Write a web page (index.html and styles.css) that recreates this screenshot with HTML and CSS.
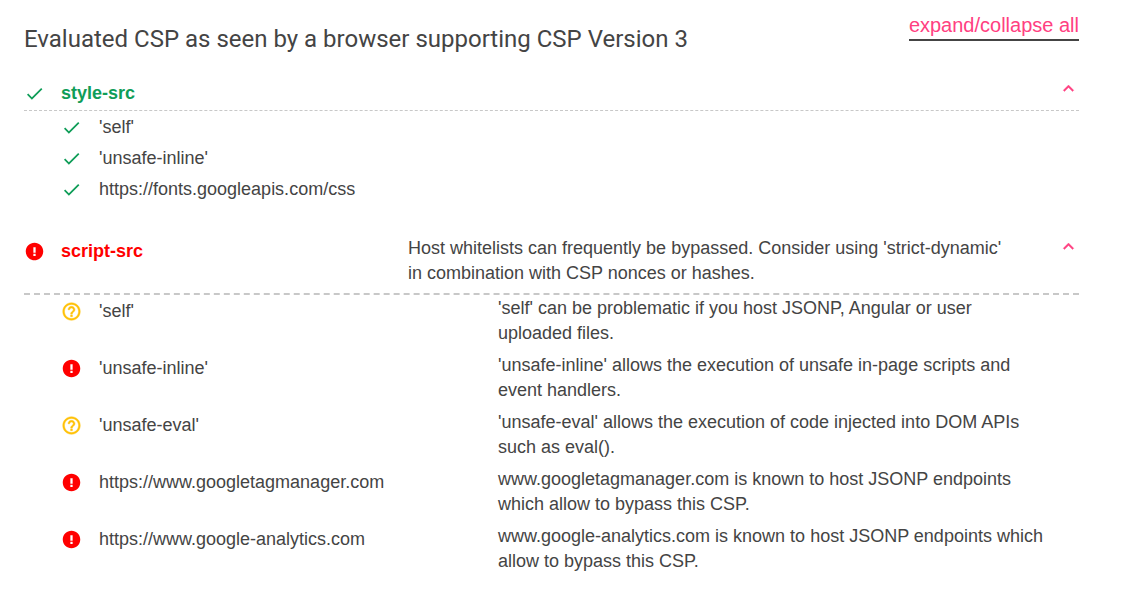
FILE: index.html
```html
<!DOCTYPE html>
<html lang="en">
<head>
<meta charset="utf-8">
<meta name="viewport" content="width=device-width, initial-scale=1">
<title>CSP Evaluator</title>
<link rel="stylesheet" href="styles.css">
</head>
<body>
<svg class="sprite" aria-hidden="true">
  <symbol id="check" viewBox="0 0 24 24"><path d="M9 16.17 4.83 12l-1.42 1.41L9 19 21 7l-1.41-1.41z"/></symbol>
  <symbol id="error" viewBox="0 0 24 24"><path d="M12 2C6.48 2 2 6.48 2 12s4.48 10 10 10 10-4.48 10-10S17.52 2 12 2zm1.3 15h-2.6v-2.3h2.6V17zm0-3.7h-2.6V7h2.6v6.3z"/></symbol>
  <symbol id="help" viewBox="0 0 24 24"><path stroke="currentColor" stroke-width=".5" d="M11 18h2v-2h-2v2zm1-16C6.48 2 2 6.48 2 12s4.48 10 10 10 10-4.48 10-10S17.52 2 12 2zm0 18c-4.41 0-8-3.59-8-8s3.59-8 8-8 8 3.59 8 8-3.59 8-8 8zm0-14c-2.21 0-4 1.79-4 4h2c0-1.1.9-2 2-2s2 .9 2 2c0 2-3 1.75-3 5h2c0-2.25 3-2.5 3-5 0-2.21-1.79-4-4-4z"/></symbol>
  <symbol id="less" viewBox="0 0 24 24"><path stroke="currentColor" stroke-width=".4" d="m12 8-6 6 1.41 1.41L12 10.83l4.59 4.58L18 14z"/></symbol>
</svg>
<main class="evaluation">
  <header class="top">
    <h1 class="title">Evaluated CSP as seen by a browser supporting CSP Version 3</h1>
    <a class="toggle-all" href="#">expand/collapse all</a>
  </header>

  <section class="directive">
    <div class="directive-head ok">
      <svg class="icon green"><use href="#check"/></svg>
      <h2 class="name green">style-src</h2>
      <p class="note"></p>
      <button class="toggle" type="button" aria-label="Toggle style-src" aria-expanded="true"><svg class="chevron"><use href="#less"/></svg></button>
    </div>
    <ul class="values">
      <li class="value"><svg class="icon green"><use href="#check"/></svg><span class="name">'self'</span></li>
      <li class="value"><svg class="icon green"><use href="#check"/></svg><span class="name">'unsafe-inline'</span></li>
      <li class="value"><svg class="icon green"><use href="#check"/></svg><span class="name">https://fonts.googleapis.com/css</span></li>
    </ul>
  </section>

  <section class="directive">
    <div class="directive-head bad">
      <svg class="icon red"><use href="#error"/></svg>
      <h2 class="name red">script-src</h2>
      <p class="note">Host whitelists can frequently be bypassed. Consider using 'strict-dynamic' in combination with CSP nonces or hashes.</p>
      <button class="toggle" type="button" aria-label="Toggle script-src" aria-expanded="true"><svg class="chevron"><use href="#less"/></svg></button>
    </div>
    <ul class="values">
      <li class="value"><svg class="icon amber"><use href="#help"/></svg><span class="name">'self'</span><p class="note">'self' can be problematic if you host JSONP, Angular or user uploaded files.</p></li>
      <li class="value"><svg class="icon red"><use href="#error"/></svg><span class="name">'unsafe-inline'</span><p class="note">'unsafe-inline' allows the execution of unsafe in-page scripts and event handlers.</p></li>
      <li class="value"><svg class="icon amber"><use href="#help"/></svg><span class="name">'unsafe-eval'</span><p class="note">'unsafe-eval' allows the execution of code injected into DOM APIs such as eval().</p></li>
      <li class="value"><svg class="icon red"><use href="#error"/></svg><span class="name">https://www.googletagmanager.com</span><p class="note">www.googletagmanager.com is known to host JSONP endpoints which allow to bypass this CSP.</p></li>
      <li class="value"><svg class="icon red"><use href="#error"/></svg><span class="name">https://www.google-analytics.com</span><p class="note">www.google-analytics.com is known to host JSONP endpoints which allow to bypass this CSP.</p></li>
    </ul>
  </section>
</main>
<script src="script.js"></script>
</body>
</html>
```

FILE: styles.css
```css
* {
  box-sizing: border-box;
}

body {
  margin: 0;
  background: #fff;
  color: #444;
  font: 18px/25px "Liberation Sans", Arial, sans-serif;
}

h1, h2, p, ul {
  margin: 0;
  padding: 0;
}

.sprite {
  display: none;
}

.evaluation {
  display: flex;
  flex-direction: column;
  padding: 14px 51px 16px 24px;
}

.top {
  display: flex;
  justify-content: space-between;
  align-items: flex-start;
  margin-bottom: 25px;
}

.title {
  padding-top: 11px;
  font: 400 24px/28px Roboto, sans-serif;
}

.toggle-all {
  padding-bottom: 3px;
  border-bottom: 2px solid #444;
  color: #ff4081;
  font-size: 20px;
  line-height: 22px;
  text-decoration: none;
}

.directive + .directive {
  margin-top: 31px;
}

.directive-head {
  display: grid;
  grid-template-columns: 37px 347px 1fr 21px;
  align-items: start;
}

.directive-head.ok {
  padding-bottom: 1px;
  border-bottom: 1px dashed #c8c8c8;
}

.directive-head.bad {
  border-bottom: 2px dashed #c8c8c8;
}

.values {
  padding-top: 1px;
  list-style: none;
}

.value {
  display: grid;
  grid-template-columns: 38px 399px 1fr;
  align-items: start;
  padding: 0 31px 0 37px;
}

.name {
  font-size: 18px;
  line-height: 31px;
}

.note {
  padding-bottom: 7px;
}

.directive-head .note {
  padding: 0 40px 0 0;
}

.directive-head.bad .note {
  padding-bottom: 7px;
}

.icon {
  width: 21px;
  height: 31px;
  fill: currentColor;
}

.green {
  color: #0f9d58;
}

.red {
  color: #f00;
}

.amber {
  color: #ffc107;
}

.toggle {
  width: 21px;
  height: 21px;
  padding: 0;
  border: 0;
  background: none;
  color: #ff4081;
  cursor: pointer;
}

.chevron {
  display: block;
  width: 21px;
  height: 21px;
  fill: currentColor;
}
```

FILE: script.js
```js
const buttons = [...document.querySelectorAll(".toggle")];

function setOpen(button, open) {
  button.setAttribute("aria-expanded", String(open));
  button.closest(".directive").querySelector(".values").hidden = !open;
}

buttons.forEach((button) => {
  button.addEventListener("click", () => {
    setOpen(button, button.getAttribute("aria-expanded") !== "true");
  });
});

document.querySelector(".toggle-all").addEventListener("click", (event) => {
  event.preventDefault();
  const anyOpen = buttons.some((b) => b.getAttribute("aria-expanded") === "true");
  buttons.forEach((b) => setOpen(b, !anyOpen));
});
```
